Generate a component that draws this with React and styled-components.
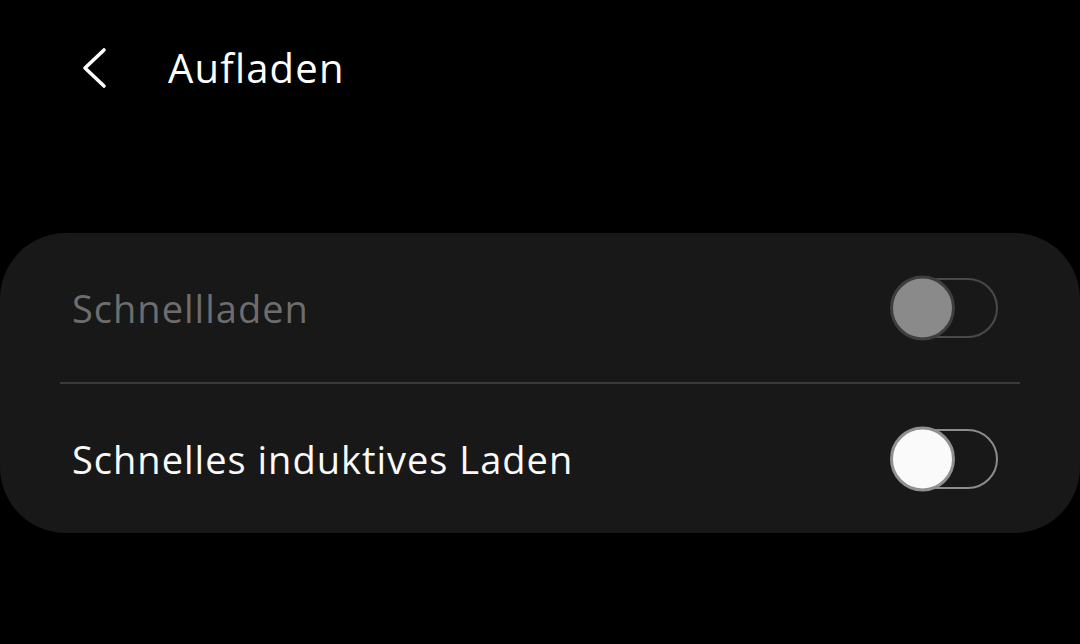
import React from 'react'
import styled, { createGlobalStyle } from 'styled-components'

const Global = createGlobalStyle`
  html, body { margin: 0; padding: 0; background: #000; }
  body { font-family: "Open Sans", "Noto Sans", sans-serif; }
`

const Page = styled.div`
  width: 1080px;
  height: 644px;
  background: #000;
  display: flex;
  flex-direction: column;
  overflow: hidden;
`

const Header = styled.div`
  height: 136px;
  display: flex;
  align-items: flex-start;
  padding: 44px 0 0 76px;
  box-sizing: border-box;
`

const Back = styled.button`
  width: 36px;
  height: 48px;
  border: 0;
  padding: 0;
  background: none;
  display: flex;
  align-items: center;
  justify-content: center;
  cursor: pointer;
`

const Title = styled.h1`
  margin: 0 0 0 56px;
  color: #fff;
  font-size: 40px;
  font-weight: 400;
  letter-spacing: 1.2px;
  line-height: 48px;
`

const Card = styled.div`
  margin-top: 97px;
  background: #181818;
  border-radius: 66px;
  display: flex;
  flex-direction: column;
`

const Row = styled.div`
  height: 149px;
  display: flex;
  align-items: center;
  justify-content: space-between;
  padding: 0 82px 0 72px;
  box-sizing: border-box;
`

const Label = styled.span`
  font-size: 38px;
  letter-spacing: 1px;
  color: ${p => (p.disabled ? '#6d6d6d' : '#fafafa')};
`

const Divider = styled.div`
  height: 2px;
  margin: 0 60px;
  background: #3a3a3a;
`

const Track = styled.div`
  position: relative;
  width: 106px;
  height: 60px;
  border-radius: 30px;
  border: 2.5px solid ${p => (p.disabled ? '#4a4a4a' : '#8c8c8c')};
  box-sizing: border-box;
`

const Thumb = styled.div`
  position: absolute;
  left: -4px;
  top: 50%;
  transform: translateY(-50%);
  width: 65px;
  height: 65px;
  border-radius: 50%;
  box-sizing: border-box;
  background: ${p => (p.disabled ? '#8a8a8a' : '#fafafa')};
  border: 3px solid ${p => (p.disabled ? '#3e3e3e' : '#909090')};
`

function Toggle({ disabled }) {
  return (
    <Track disabled={disabled}>
      <Thumb disabled={disabled} />
    </Track>
  )
}

export default function App() {
  return (
    <Page>
      <Global />
      <Header>
        <Back aria-label="Zurück">
          <svg width="30" height="42" viewBox="0 0 30 42" fill="none">
            <path d="M25 3 L6 21 L25 39" stroke="#fff" strokeWidth="3.6" strokeLinecap="round" strokeLinejoin="round" />
          </svg>
        </Back>
        <Title>Aufladen</Title>
      </Header>
      <Card>
        <Row>
          <Label disabled>Schnellladen</Label>
          <Toggle disabled />
        </Row>
        <Divider />
        <Row>
          <Label>Schnelles induktives Laden</Label>
          <Toggle />
        </Row>
      </Card>
    </Page>
  )
}
